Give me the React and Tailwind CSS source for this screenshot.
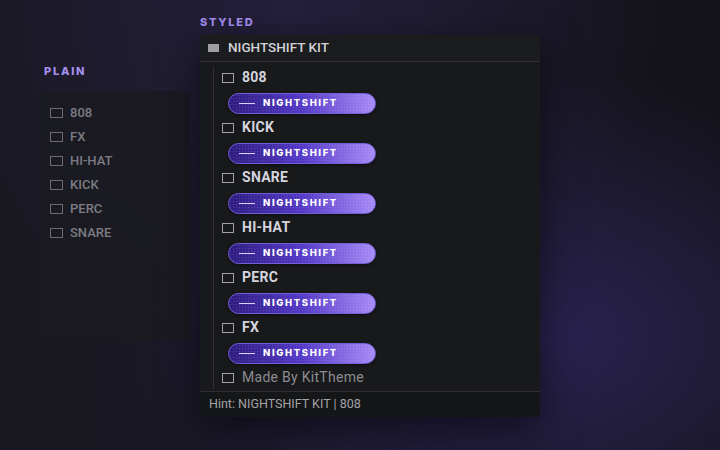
import React from 'react';

const plainItems = ['808', 'FX', 'HI-HAT', 'KICK', 'PERC', 'SNARE'];
const styledItems = ['808', 'KICK', 'SNARE', 'HI-HAT', 'PERC', 'FX'];

const cond = "font-['Roboto',sans-serif]";

const Pill = () => (
  <div className="ml-[6px] mt-[4px] flex h-[21px] w-[148px] items-center rounded-full border border-[#7160d8] bg-[radial-gradient(circle,rgba(255,255,255,0.14)_0.6px,transparent_0.9px),linear-gradient(90deg,#2f1d80,#5439c8_50%,#a88cf7)] bg-[length:3px_3px,100%_100%] pl-[10px] shadow-[0_1px_3px_rgba(0,0,0,0.5)]">
    <span className="h-px w-[16px] bg-[#d8d0ff]" />
    <span className="ml-[8px] font-['Inter',sans-serif] text-[9.5px] font-extrabold tracking-[0.17em] text-white">
      NIGHTSHIFT
    </span>
  </div>
);

const Box = ({ plain }) => (
  <span
    className={
      plain
        ? 'h-[10px] w-[13px] border border-[#6b6b70]'
        : 'h-[10px] w-[12px] border-[1.5px] border-[#a0a0a6]'
    }
  />
);

const App = () => {
  return (
    <div className="flex h-[450px] w-[720px] overflow-hidden bg-[radial-gradient(ellipse_at_75%_75%,#2a2250_0%,transparent_55%),radial-gradient(ellipse_at_40%_0%,#241f3c_0%,transparent_60%),linear-gradient(90deg,#19171f,#1b1827_50%,#131218)] pl-10 pt-[14px]">
      {/* plain */}
      <div className="mt-[49px] flex w-[150px] flex-col">
        <div className="ml-[4px] font-['Inter',sans-serif] text-[11px] font-extrabold tracking-[0.16em] text-[#a48ff0]">
          PLAIN
        </div>
        <div className="mt-[11px] flex h-[250px] flex-col gap-[8px] bg-[#1a1a20]/80 pl-[10px] pt-[14px]">
          {plainItems.map((item) => (
            <div key={item} className="flex h-[16px] items-center gap-[7px]">
              <Box plain />
              <span className={`${cond} text-[13px] font-medium text-[#7c7c82]`}>{item}</span>
            </div>
          ))}
        </div>
      </div>

      {/* styled */}
      <div className="ml-[10px] flex flex-col">
        <div className="font-['Inter',sans-serif] text-[11px] font-extrabold tracking-[0.16em] text-[#a48ff0]">
          STYLED
        </div>
        <div className="mt-[4px] w-[340px] overflow-hidden rounded-[3px] bg-[#18191b] shadow-[0_12px_40px_rgba(0,0,0,0.55)]">
          <div className="flex h-[27px] items-center border-b border-[#303035] bg-[#1b1c1e] pl-[8px]">
            <span className="h-[8px] w-[11px] bg-[#9d9da3]" />
            <span className={`${cond} ml-[9px] text-[13.5px] font-medium text-[#d2d2d8]`}>
              NIGHTSHIFT KIT
            </span>
          </div>
          <div className="pl-[13px] pt-[5px] pb-[2px]">
            <div className="border-l border-[#313136] pl-[8px]">
              {styledItems.map((item) => (
                <div key={item} className="pb-[3px]">
                  <div className="flex h-[22px] items-center gap-[8px]">
                    <Box />
                    <span className={`${cond} text-[14px] font-bold tracking-[0.02em] text-[#d4d4de]`}>{item}</span>
                  </div>
                  <Pill />
                </div>
              ))}
              <div className="flex h-[22px] items-center gap-[8px]">
                <Box />
                <span className={`${cond} text-[14px] tracking-[0.02em] text-[#8c8c92]`}>Made By KitTheme</span>
              </div>
            </div>
          </div>
          <div className="flex h-[26px] items-center border-t border-[#2e2e33] bg-[#151617] pl-[9px]">
            <span className={`${cond} text-[12.5px] text-[#a3a3a8]`}>Hint: NIGHTSHIFT KIT | 808</span>
          </div>
        </div>
      </div>
    </div>
  );
};

export default App;
